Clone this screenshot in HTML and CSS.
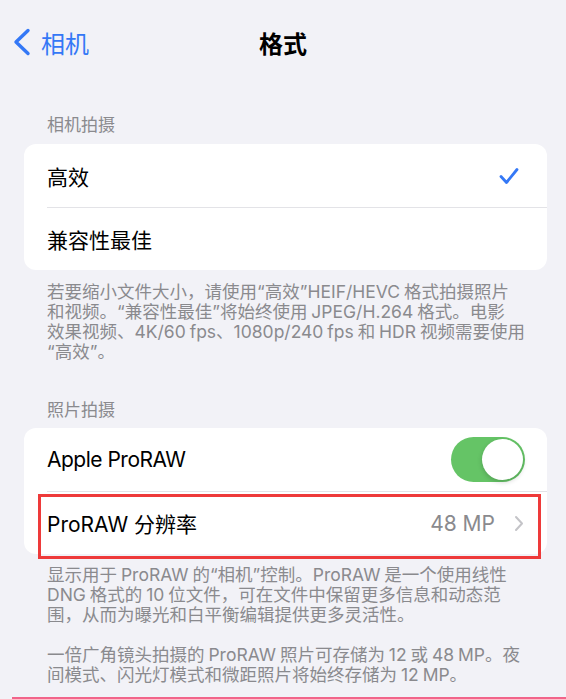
FILE: index.html
```html
<!DOCTYPE html>
<html lang="zh-CN">
<head>
    <meta charset="UTF-8">
    <meta name="viewport" content="width=device-width, initial-scale=1.0">
    <title>格式</title>
    <link rel="stylesheet" href="styles.css">
</head>
<body>
    <header class="nav">
        <a class="back" href="#">
            <svg class="back-icon" width="20" height="28" viewBox="0 0 20 28">
                <path d="M16 2.5 L4 14 L16 25.5" fill="none" stroke="#3478f6" stroke-width="3.4" stroke-linecap="round" stroke-linejoin="round"/>
            </svg>
            <span>相机</span>
        </a>
        <h1>格式</h1>
        <div></div>
    </header>

    <div class="group-title">相机拍摄</div>
    <div class="card">
        <div class="row">
            <div class="row-inner">
                <span>高效</span>
                <svg class="check" width="20" height="18" viewBox="0 0 20 18">
                    <path d="M2 9.5 L7.5 15.5 L18 2.5" fill="none" stroke="#3478f6" stroke-width="2.8" stroke-linecap="round" stroke-linejoin="round"/>
                </svg>
            </div>
        </div>
        <div class="row">
            <div class="row-inner">
                <span>兼容性最佳</span>
            </div>
        </div>
    </div>
    <p class="group-footer">
        若要缩小文件大小，请使用“高效”HEIF/HEVC 格式拍摄照片<br>
        和视频。“兼容性最佳”将始终使用 JPEG/H.264 格式。电影<br>
        效果视频、4K/60 fps、1080p/240 fps 和 HDR 视频需要使用<br>
        “高效”。
    </p>

    <div class="group-title">照片拍摄</div>
    <div class="card">
        <div class="row">
            <div class="row-inner toggle-row">
                <span class="latin">Apple ProRAW</span>
                <div class="switch"><div class="knob"></div></div>
            </div>
        </div>
        <div class="row marked">
            <div class="row-inner">
                <span>ProRAW 分辨率</span>
                <span class="detail">
                    48 MP
                    <svg class="chevron" width="10" height="17" viewBox="0 0 10 17">
                        <path d="M2 2 L8 8.5 L2 15" fill="none" stroke="#c4c4c8" stroke-width="2" stroke-linecap="round" stroke-linejoin="round"/>
                    </svg>
                </span>
            </div>
            <div class="highlight"></div>
        </div>
    </div>
    <p class="group-footer second">
        显示用于 ProRAW 的“相机”控制。ProRAW 是一个使用线性<br>
        DNG 格式的 10 位文件，可在文件中保留更多信息和动态范<br>
        围，从而为曝光和白平衡编辑提供更多灵活性。<br>
        <br>
        一倍广角镜头拍摄的 ProRAW 照片可存储为 12 或 48 MP。夜<br>
        间模式、闪光灯模式和微距照片将始终存储为 12 MP。
    </p>
    <div class="next-mark"></div>
</body>
</html>
```

FILE: styles.css
```css
body {
    margin: 0;
    background-color: #f2f2f7;
    font-family: "Inter", "Noto Sans CJK SC", sans-serif;
    color: #000;
    overflow: hidden;
}
.nav {
    display: grid;
    grid-template-columns: 1fr auto 1fr;
    align-items: center;
    height: 84px;
}
.back {
    display: flex;
    align-items: center;
    gap: 9px;
    padding-left: 12px;
    color: #3478f6;
    text-decoration: none;
    font-size: 24px;
}
.back-icon {
    display: block;
}
.nav h1 {
    margin: 0;
    font-size: 24px;
    font-weight: 700;
}
.group-title {
    margin: 30px 0 8px;
    padding-left: 47px;
    font-size: 17px;
    line-height: 22px;
    color: #8a8a8e;
}
.card {
    margin: 0 19px 0 24px;
    background-color: #fff;
    border-radius: 12px;
}
.row {
    position: relative;
    padding-left: 23px;
}
.row-inner {
    display: flex;
    align-items: center;
    justify-content: space-between;
    height: 63px;
    padding-right: 28px;
    font-size: 21px;
}
.row + .row .row-inner {
    border-top: 1px solid #e3e3e7;
    height: 62px;
}
.latin {
    letter-spacing: -0.5px;
}
.check {
    display: block;
}
.toggle-row {
    padding-right: 22px;
}
.switch {
    width: 74px;
    height: 45px;
    border-radius: 23px;
    background-color: #65c466;
    position: relative;
}
.knob {
    position: absolute;
    top: 2px;
    right: 2px;
    width: 41px;
    height: 41px;
    border-radius: 50%;
    background-color: #fff;
    box-shadow: 0 2px 5px rgba(0,0,0,0.18);
}
.marked .row-inner {
    padding-right: 23px;
}
.detail {
    display: flex;
    align-items: center;
    gap: 19px;
    color: #8a8a8e;
}
.chevron {
    display: block;
}
.highlight {
    position: absolute;
    left: 14px;
    right: 6px;
    top: 3px;
    bottom: -5px;
    border: 3px solid #ee3a3a;
}
.group-footer {
    margin: 12px 0 0;
    padding: 0 8px 0 47px;
    font-size: 17.5px;
    line-height: 20px;
    word-spacing: -1px;
    color: #8a8a8e;
}
.group-footer + .group-title {
    margin-top: 37px;
    margin-bottom: 7px;
}
.group-footer.second {
    margin-top: 11px;
}
.next-mark {
    margin: 12px 0 0 12px;
    border-top: 3px solid #f2648a;
}
```
